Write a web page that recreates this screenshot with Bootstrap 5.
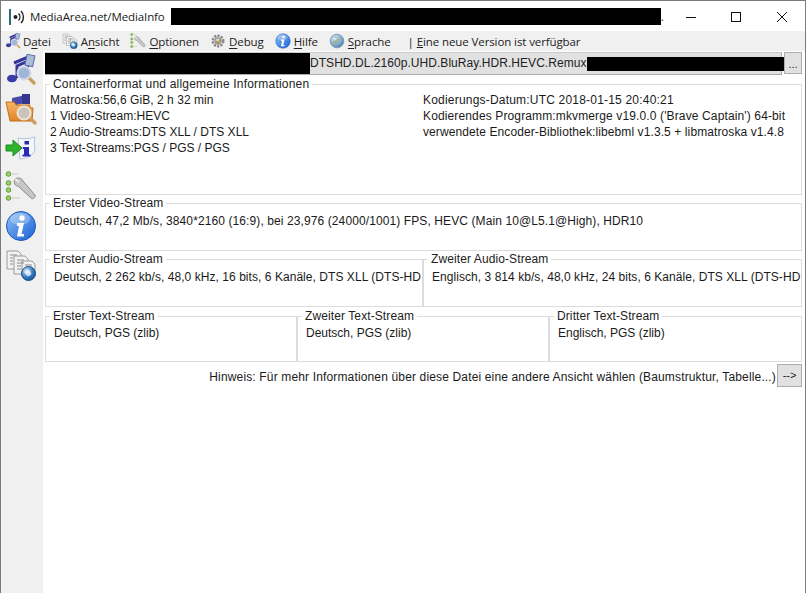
<!DOCTYPE html>
<html lang="de"><head><meta charset="utf-8"><title>MediaInfo</title>
<link href="https://cdn.jsdelivr.net/npm/bootstrap@5.3.0/dist/css/bootstrap.min.css" rel="stylesheet">
<style>
html,body{height:100%;overflow:hidden}
body{font:12px/15px "Liberation Sans",Arial,sans-serif;color:#1a1a1a;background:#fff}
.defs-holder{position:absolute;width:0;height:0}
.win{width:806px;height:593px;border:1px solid #7a7a7a;border-width:1px 1px 0 1px}
.ui{font-family:"Open Sans","Noto Sans",sans-serif}
.tbar{height:29px;margin-top:1px;padding-left:8px;font-size:11.5px;letter-spacing:-.1px}
.logo{margin-right:5px}
.ink{background:#000}
.ink-t{width:490px;height:17px;margin-left:6px;margin-bottom:1px}
.capbtns{margin-left:auto;width:134px;padding-right:18px}
.capbtns svg{display:block}
.cap-min{margin-left:15px}.cap-max{margin-left:35px}.cap-x{margin-left:36px}
.mbar{height:20px;background:#f0f0f0;font-size:11.5px;letter-spacing:-.1px;padding-left:4px;color:#222}
.mitem{margin-right:11px;gap:2px}
.mitem-g{gap:3px}
.mitem u{text-underline-offset:2px}
.sep{margin-left:6px}
.main{height:542px}
.side{width:42px;background:#f0f0f0;padding:3px 0 0 4px;gap:7px}
.side svg{display:block}
.cont{width:761px;padding:1px 2px 0 2px}
.frow{height:23px;gap:2px}
.ffield{width:737px;height:23px;background:#e1e1e1;border:1px solid #ababab;border-top-color:#c9c9c9;color:#222;font-size:12px;line-height:21px;white-space:nowrap;letter-spacing:.05px}
.ink-a{width:265px;height:21px;margin-left:-1px}
.ink-b{width:201px;height:14px;margin-right:-7px}
.fbtn{width:18px;height:22px;background:#e1e1e1;border:1px solid #adadad;padding:0;font-size:11px;line-height:22px;color:#222;border-radius:0}
fieldset.fs{border:1px solid #dcdcdc;padding:0 0 0 4px;margin:0;min-width:0;overflow:hidden;background:#fff}
fieldset.fs legend{float:none;width:auto;font-size:12px;line-height:13px;margin:0;padding:0 3px;color:#222;white-space:nowrap;letter-spacing:.1px}
fieldset.fs legend.ls-wide{letter-spacing:.2px}
fieldset.fs.f1{height:117px;margin-top:3px}
fieldset.fs.f2{height:54px;margin-top:2px}
fieldset.fs.f3{height:54px;margin-top:2px}
fieldset.fs.f4{height:52px;margin-top:3px}
.lines div{height:16px;line-height:16px;white-space:nowrap}
.col2{width:373px}
.body1{padding-top:1px}
.tx{white-space:nowrap;padding:2px 0 0 4px;line-height:16px}
.tx3{padding-top:3px}
.ls05{letter-spacing:.05px}.ls1{letter-spacing:.1px}.ls13{letter-spacing:.13px}.ls15{letter-spacing:.15px}.ls2{letter-spacing:.2px}
.hint{margin-top:2px;height:23px;white-space:nowrap}
.hbtn{width:25px;height:23px;background:#e1e1e1;border:1px solid #adadad;font-size:11px;line-height:19px;padding:0;border-radius:0;margin-left:1px;color:#222}
.w50a{width:378px}.w50b{width:379px}
.w3a,.w3b{width:252px}.w3c{width:253px}
</style></head><body>
<svg class="defs-holder">
<defs>
<linearGradient id="blu" x1="0" y1="0" x2="1" y2="1"><stop offset="0" stop-color="#8fc1f5"/><stop offset="1" stop-color="#1560d6"/></linearGradient>
<linearGradient id="org" x1="0" y1="0" x2="0" y2="1"><stop offset="0" stop-color="#f6b765"/><stop offset="1" stop-color="#e0832a"/></linearGradient>
<radialGradient id="glob" cx=".35" cy=".3" r=".8"><stop offset="0" stop-color="#dcebf6"/><stop offset=".6" stop-color="#7fabcd"/><stop offset="1" stop-color="#3f74a4"/></radialGradient>
<radialGradient id="glob2" cx=".35" cy=".3" r=".8"><stop offset="0" stop-color="#cfe4f4"/><stop offset=".6" stop-color="#2f78c0"/><stop offset="1" stop-color="#1b4f8a"/></radialGradient>
<symbol id="i-file" viewBox="0 0 32 32">
<path d="M9 9l14-6v4L12 12v12" fill="none" stroke="#34349a" stroke-width="3"/>
<ellipse cx="7" cy="24.500" rx="5" ry="3.800" fill="#3c3ca8"/><path d="M22 3v15" stroke="#34349a" stroke-width="4"/>
<ellipse cx="17" cy="21" rx="5" ry="3.500" fill="#3c3ca8"/>
<rect x="21" y="1" width="8" height="11" fill="#a9bcd8" stroke="#5b6ca8" transform="rotate(12 25 6)"/>
<path d="M23 23l6 6" stroke="#caa060" stroke-width="3.500" stroke-linecap="round"/><circle cx="19" cy="19" r="6.500" fill="#9fb6d8" stroke="#d5d9e8" stroke-width="2"/></symbol>
<symbol id="i-folder" viewBox="0 0 32 32">
<path d="M7 13V5l14-3 3 7z" fill="#4a4aa8"/><rect x="17" y="1" width="8" height="10" fill="#36368e"/>
<path d="M1 9h8l2 3h14v3l3 0-1 13H5z" fill="url(#org)" stroke="#c46f1c"/>
<path d="M24 24l6 6" stroke="#caa060" stroke-width="3.500" stroke-linecap="round"/><circle cx="19" cy="20" r="6.500" fill="#c9c3b8" stroke="#ece4da" stroke-width="2"/></symbol>
<symbol id="i-export" viewBox="0 0 32 32">
<path d="M13 6c5 1 11 1 17-1-1 4-1 8 0 12 0 5-6 9-15 10z" fill="#f4f7fc" stroke="#b4c4dc"/>
<path d="M19.500 9h4.500v3.500h-4.500zM18 15h6v7.500h1.500v2h-8v-2h1.500v-5.500h-1.500z" fill="#2a2ab8"/>
<path d="M1 13h7V8l9 8-9 8v-5H1z" fill="#2fb32f" stroke="#1a8c1a"/></symbol>
<symbol id="i-tools" viewBox="0 0 32 32">
<g fill="#9ad16a" stroke="#5f9c35"><circle cx="3.500" cy="3" r="2.300"/><circle cx="3.500" cy="12" r="2.300"/><circle cx="3.500" cy="19" r="2.300"/><circle cx="3.500" cy="27" r="2.300"/></g>
<path d="M7 3h6M7 27h8" stroke="#c8c8c8"/>
<path d="M10 8c3-2 7-1 8 2l12 14c1 2-2 5-4 3L13 15c-3 0-5-3-3-7z" fill="#c6c6c6" stroke="#8c8c8c"/><path d="M10 8l4 3" stroke="#eee" stroke-width="2"/></symbol>
<symbol id="i-info" viewBox="0 0 32 32"><circle cx="16" cy="16" r="14.500" fill="url(#blu)" stroke="#1d55b8"/>
<ellipse cx="15" cy="9" rx="10" ry="6" fill="#fff" opacity=".28"/><circle cx="17" cy="8" r="2.700" fill="#fff"/><path d="M12 13h7l-2.500 11h2.500v2.500h-7L14 16h-2z" fill="#fff"/></symbol>
<symbol id="i-view" viewBox="0 0 32 32">
<g fill="#f2f2f2" stroke="#9a9a9a"><path d="M2 2h11l3 3v15H2z"/><path d="M9 7h11l3 3v15H9z"/><path d="M17 12h10l3 3v6H17z"/></g>
<path d="M5 6h7M5 9h3M5 12h3M5 15h3M12 11h7M12 14h7M12 17h4M12 20h4M20 16h7" stroke="#8a8a8a"/>
<circle cx="23.500" cy="24.500" r="7" fill="url(#glob2)" stroke="#1d4c84"/><path d="M19 23c3-2 5-3 6-1s3 3-1 5c-2 1-3-2-5-4z" fill="#fff" opacity=".7"/></symbol>
<symbol id="i-lang" viewBox="0 0 16 16"><circle cx="8" cy="8" r="6.800" fill="url(#glob)" stroke="#7f9db8"/><path d="M4 4c3-1 5 0 4 2s-4 1-4 3 3 4 4 1 3-2 4-4" fill="#9ab28a" opacity=".85"/></symbol>
<symbol id="i-gear" viewBox="0 0 16 16"><circle cx="8" cy="8" r="5.300" fill="#e4e4e4" stroke="#8a8a8a" stroke-width="2.400" stroke-dasharray="2.200 1.200"/><circle cx="8" cy="8" r="3.200" fill="#d8d8d8" stroke="#7b7b7b"/><path d="M6 8l2 2 3-4" fill="none" stroke="#a88a38" stroke-width="1.300"/></symbol>
</defs></svg>
<div class="win d-flex flex-column">
<div class="tbar ui d-flex align-items-center">
<svg class="logo flex-shrink-0" width="16" height="18" viewBox="0 0 16 18"><rect x="0" y="1" width="2" height="16" fill="#2c6e73"/><circle cx="6.500" cy="9" r="2" fill="#222"/><path d="M9.500 5.500a5 5 0 0 1 0 7M12 3a8.500 8.500 0 0 1 0 12" fill="none" stroke="#222" stroke-width="1.400"/></svg>
<span>MediaArea.net/MediaInfo</span><span class="ink ink-t"></span><span>.</span>
<span class="capbtns d-flex align-items-center">
<svg class="cap-min" width="10" height="10" viewBox="0 0 10 10"><path d="M0 5.500h10" stroke="#111"/></svg>
<svg class="cap-max" width="10" height="10" viewBox="0 0 10 10"><rect x=".5" y=".5" width="9" height="9" fill="none" stroke="#111"/></svg>
<svg class="cap-x" width="10" height="10" viewBox="0 0 10 10"><path d="M0 0l10 10M10 0L0 10" stroke="#111"/></svg>
</span></div>
<div class="mbar ui d-flex align-items-center">
<span class="mitem d-flex align-items-center"><svg width="16" height="16"><use href="#i-file"/></svg><span>D<u>a</u>tei</span></span>
<span class="mitem mitem-g d-flex align-items-center"><svg width="16" height="16"><use href="#i-view"/></svg><span>A<u>n</u>sicht</span></span>
<span class="mitem mitem-g d-flex align-items-center"><svg width="16" height="16"><use href="#i-tools"/></svg><span><u>O</u>ptionen</span></span>
<span class="mitem mitem-g d-flex align-items-center"><svg width="16" height="16"><use href="#i-gear"/></svg><span><u>D</u>ebug</span></span>
<span class="mitem mitem-g d-flex align-items-center"><svg width="16" height="16"><use href="#i-info"/></svg><span><u>H</u>ilfe</span></span>
<span class="mitem mitem-g d-flex align-items-center"><svg width="16" height="16"><use href="#i-lang"/></svg><span><u>S</u>prache</span></span>
<span class="sep">| <u>E</u>ine neue Version ist verfügbar</span>
</div>
<div class="main d-flex">
<div class="side d-flex flex-column">
<svg width="32" height="32"><use href="#i-file"/></svg>
<svg width="32" height="32"><use href="#i-folder"/></svg>
<svg width="32" height="32"><use href="#i-export"/></svg>
<svg width="32" height="32"><use href="#i-tools"/></svg>
<svg width="32" height="32"><use href="#i-info"/></svg>
<svg width="32" height="32"><use href="#i-view"/></svg>
</div>
<div class="cont">
<div class="frow d-flex">
<div class="ffield d-flex align-items-center"><span class="ink ink-a flex-shrink-0"></span><span>DTSHD.DL.2160p.UHD.BluRay.HDR.HEVC.Remux</span><span class="ink ink-b flex-shrink-0 ms-auto"></span></div>
<button class="btn fbtn" type="button">...</button>
</div>
<fieldset class="fs f1"><legend class="ls-wide">Containerformat und allgemeine Informationen</legend>
<div class="d-flex lines body1">
<div class="col2"><div class="ls05">Matroska:56,6 GiB, 2 h 32 min</div><div>1 Video-Stream:HEVC</div><div>2 Audio-Streams:DTS XLL / DTS XLL</div><div>3 Text-Streams:PGS / PGS / PGS</div></div>
<div><div class="ls2">Kodierungs-Datum:UTC 2018-01-15 20:40:21</div><div class="ls13">Kodierendes Programm:mkvmerge v19.0.0 ('Brave Captain') 64-bit</div><div class="ls1">verwendete Encoder-Bibliothek:libebml v1.3.5 + libmatroska v1.4.8</div></div>
</div></fieldset>
<fieldset class="fs f2"><legend>Erster Video-Stream</legend><div class="tx tx3 ls1">Deutsch, 47,2 Mb/s, 3840*2160 (16:9), bei 23,976 (24000/1001) FPS, HEVC (Main 10@L5.1@High), HDR10</div></fieldset>
<div class="d-flex">
<fieldset class="fs f3 w50a"><legend>Erster Audio-Stream</legend><div class="tx tx3 ls05">Deutsch, 2 262 kb/s, 48,0 kHz, 16 bits, 6 Kanäle, DTS XLL (DTS-HD</div></fieldset>
<fieldset class="fs f3 w50b"><legend>Zweiter Audio-Stream</legend><div class="tx tx3 ls05">Englisch, 3 814 kb/s, 48,0 kHz, 24 bits, 6 Kanäle, DTS XLL (DTS-HD</div></fieldset>
</div>
<div class="d-flex">
<fieldset class="fs f4 w3a"><legend>Erster Text-Stream</legend><div class="tx">Deutsch, PGS (zlib)</div></fieldset>
<fieldset class="fs f4 w3b"><legend>Zweiter Text-Stream</legend><div class="tx">Deutsch, PGS (zlib)</div></fieldset>
<fieldset class="fs f4 w3c"><legend>Dritter Text-Stream</legend><div class="tx">Englisch, PGS (zlib)</div></fieldset>
</div>
<div class="hint d-flex justify-content-end align-items-center"><span class="ls15 mt-1">Hinweis: Für mehr Informationen über diese Datei eine andere Ansicht wählen (Baumstruktur, Tabelle...)</span><button class="btn hbtn" type="button">--&gt;</button></div>
</div></div></div>
</body></html>
